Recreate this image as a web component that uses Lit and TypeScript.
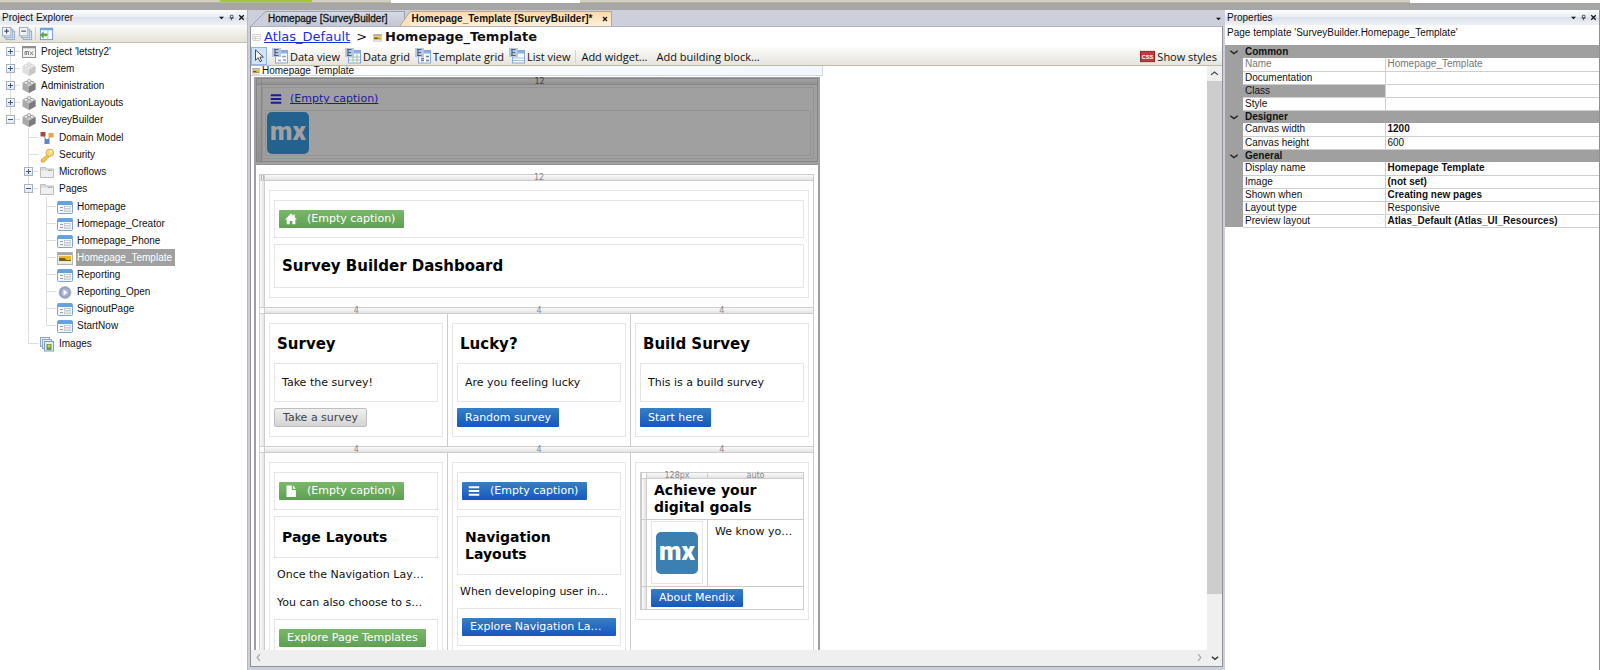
import { LitElement, html, css, svg, nothing, TemplateResult } from "lit";
import { customElement } from "lit/decorators.js";
import { classMap } from "lit/directives/class-map.js";

type IconName =
  | "project" | "moduleLight" | "module" | "domain" | "key" | "folder"
  | "page" | "template" | "flow" | "images" | "expandAll" | "collapseAll"
  | "locate" | "caret" | "pin" | "close" | "layout" | "cursor" | "dataview"
  | "datagrid" | "templategrid" | "listview" | "css" | "menu" | "home"
  | "file" | "up" | "down" | "left" | "right" | "chevron";

const cube = (top: string, left: string, right: string) => svg`
  <path d="M1.500 5 8 2l6.500 3v6.500L8 15l-6.500-3.500z" fill=${left}/>
  <path d="M8 8.500 14.500 5v6.500L8 15z" fill=${right}/>
  <path d="M1.500 5 8 2l6.500 3L8 8.500z" fill=${top}/>
  <ellipse cx="5" cy="4.800" rx="2" ry="1.400" fill="#f4f4f4" stroke=${right} stroke-width=".6"/>
  <ellipse cx="11" cy="4.800" rx="2" ry="1.400" fill="#f4f4f4" stroke=${right} stroke-width=".6"/>
  <ellipse cx="8" cy="3" rx="2" ry="1.400" fill="#f4f4f4" stroke=${right} stroke-width=".6"/>`;

const badge = svg`<path d="M0 0h9v9H0z" fill="#b9c7de"/><path d="M2 1.500h4.500M3 4.500h3M2 7.500h4.500M3 1.500v6" stroke="#4d6188" stroke-width="1.200" fill="none"/>`;

const sheet = svg`<rect x="3.500" y="2.500" width="12" height="12.500" fill="#f7fafe" stroke="#86a6d6"/><path d="M8 3h7.500v2.500H8z" fill="#86b0e6"/>`;

const icons: Record<IconName, TemplateResult> = {
  project: svg`<rect x="1.500" y="2.500" width="13" height="11" fill="#f2f2f2" stroke="#8f8f8f"/><path d="M1.500 3.500h13" stroke="#8f8f8f" stroke-width="1.500"/><path d="M4 11V7.500h1.500V11M5.500 7.500H7.500V11M9 7.500l3 3.500M12 7.500 9 11" stroke="#777" stroke-width=".9" fill="none"/>`,
  moduleLight: cube("#e6e6e6", "#e0e0e0", "#c6c6c6"),
  module: cube("#c8c8c8", "#a9a9a9", "#7d7d7d"),
  domain: svg`<path d="M4 4l4 8 4-7" stroke="#888" fill="none"/><rect x="1.500" y="2" width="5" height="4.500" fill="#a34a45"/><rect x="9.500" y="3" width="5" height="4.500" fill="#f0a04b"/><rect x="5.500" y="9" width="5" height="5" fill="#5f86c0"/>`,
  key: svg`<path d="M8.500 7.500 2 13l.5 2h3l.5-1.500 1.500-.5.3-1.500L10 10z" fill="#f3c64f" stroke="#c99b35" stroke-width=".8"/><circle cx="10.800" cy="5.800" r="3.800" fill="#f8d775" stroke="#cfa341" stroke-width=".8"/><circle cx="12" cy="4.600" r="1.100" fill="#fff"/>`,
  folder: svg`<path d="M1.500 13.500v-10h5l1 1.500h7v8.500z" fill="#d8d8d8" stroke="#bdbdbd"/><path d="M2 6.500h12V13H2z" fill="#efefef"/><path d="M9 6.500h4" stroke="#b0b0b0"/>`,
  page: svg`<rect x=".5" y="2.500" width="15" height="12" rx="1" fill="#f3f6fa" stroke="#7ea6d3"/><path d="M1 2.500h14V6H1z" fill="#5fa3e2"/><path d="M3 8.500h3M3 11.500h3" stroke="#9a9fa8"/><rect x="7.500" y="7.500" width="6" height="2" fill="#fff" stroke="#b4b9c2" stroke-width=".7"/><rect x="7.500" y="11" width="6" height="1.500" fill="#fff" stroke="#b4b9c2" stroke-width=".7"/>`,
  template: svg`<rect x=".5" y="2.500" width="15" height="12" fill="#eceae4" stroke="#b8b5ab"/><path d="M1 2.500h14v2.500H1z" fill="#a5a5a5"/><path d="M2 6h12v5H2z" fill="#e8b92c"/><path d="M2 8h6l1 2h5v1H2z" fill="#7d5f14"/>`,
  flow: svg`<circle cx="8" cy="8.500" r="6" fill="#8f9dba" stroke="#b8c0d0"/><circle cx="8" cy="8.500" r="4" fill="#a9b6cf"/><path d="M6.500 5.500 10.500 8.500l-4 3z" fill="#fff"/>`,
  images: svg`<rect x="1.500" y="1.500" width="9" height="9" fill="#e9eef6" stroke="#8fa5c6"/><rect x="3.500" y="3.500" width="9" height="9" fill="#e9eef6" stroke="#8fa5c6"/><rect x="5.500" y="5.500" width="9" height="9.500" fill="#e3edf9" stroke="#7f9bc4"/><path d="M7.500 8h5v6h-5z" fill="#5f9e45"/><circle cx="10" cy="10" r="1.500" fill="#d9c84c"/>`,
  expandAll: svg`<rect x="5.500" y="5.500" width="9" height="9" fill="#dce6f3" stroke="#93a9c8"/><rect x="3.500" y="3.500" width="9" height="9" fill="#dce6f3" stroke="#93a9c8"/><rect x="1.500" y="1.500" width="9" height="9" fill="#eef3fa" stroke="#93a9c8"/><path d="M6 3v5M3.500 5.500h5" stroke="#333"/>`,
  collapseAll: svg`<rect x="5.500" y="5.500" width="9" height="9" fill="#dce6f3" stroke="#93a9c8"/><rect x="3.500" y="3.500" width="9" height="9" fill="#dce6f3" stroke="#93a9c8"/><rect x="1.500" y="1.500" width="9" height="9" fill="#eef3fa" stroke="#93a9c8"/><path d="M3.500 5.500h5" stroke="#333"/>`,
  locate: svg`<rect x="1.500" y="2.500" width="13" height="12" fill="#fdfdfd" stroke="#6f9ad0"/><path d="M1 2h14v2.500H1z" fill="#6ea5df"/><path d="M9.500 4.500v10" stroke="#a8bfdc"/><path d="M1 9.500 5 5.500v2.500h4v3H5v2.500z" fill="#57ab4e"/>`,
  caret: svg`<path d="M3.500 6.500h9L8 11z" fill="#111"/>`,
  pin: svg`<path d="M6 4h4.500v5H6z" fill="none" stroke="#333" stroke-width="1.300"/><path d="M4.500 9h7M8 9v4" stroke="#333" stroke-width="1.300"/>`,
  close: svg`<path d="m4 4 8 8M12 4l-8 8" stroke="#111" stroke-width="2.300"/>`,
  layout: svg`<rect x="1.500" y="2.500" width="13" height="11" fill="#fff" stroke="#b5b5b5"/><path d="M2 6h12M6 6v7M2 9.500h12" stroke="#b5b5b5"/>`,
  cursor: svg`<path d="M4 1v12l3-3 2 4.500 2-1-2-4.200h4z" fill="#fff" stroke="#333" stroke-width="1"/>`,
  dataview: svg`${sheet}${badge}<path d="M10 8.500h4M6 12.500h3M11 12h3" stroke="#8fa6c4" stroke-width="1.500"/>`,
  datagrid: svg`${sheet}<path d="M4 9h11M4 12h11M8 6v8M12 6v8" stroke="#a7bfa0"/>${badge}`,
  templategrid: svg`${sheet}${badge}<path d="M6 10.500h3M6 12.500h3M11 8.500h3M11 12.500h3" stroke="#6b7b90" stroke-width="1.500"/>`,
  listview: svg`${sheet}<path d="M4 10h11M4 12.500h11" stroke="#a3bede"/>${badge}`,
  css: svg`<rect x=".5" y="2.500" width="15" height="11" fill="#c0393b" stroke="#8e2426"/><text x="8" y="10.500" text-anchor="middle" font-family="Liberation Sans" font-weight="bold" font-size="6" fill="#fff">CSS</text>`,
  menu: svg`<path d="M1 3h14M1 8h14M1 13h14" stroke="currentColor" stroke-width="2.600"/>`,
  home: svg`<path d="M8 .5 0 8.500h2.300V15h4v-4.500h3.500V15h4V8.500H16L13 5.500V2h-2v1.600z" fill="currentColor"/>`,
  file: svg`<path d="M2 .5h7v6h5.500V16H2zM10.500.5l4 4.500h-4z" fill="currentColor"/>`,
  up: svg`<path d="m3 10 5-4 5 4" stroke="#444" stroke-width="1.800" fill="none"/>`,
  down: svg`<path d="m3 6 5 4 5-4" stroke="#333" stroke-width="2.400" fill="none"/>`,
  left: svg`<path d="M10 3 6 8l4 5" stroke="#aaa" stroke-width="1.800" fill="none"/>`,
  right: svg`<path d="m6 3 4 5-4 5" stroke="#aaa" stroke-width="1.800" fill="none"/>`,
  chevron: svg`<path d="m2 6 6 4.500L14 6" stroke="#222" stroke-width="2.400" fill="none"/>`,
};

const icon = (name: IconName, size = 16) =>
  html`<svg class="icon" width=${size} height=${size} viewBox="0 0 16 16" aria-hidden="true">${icons[name]}</svg>`;

const shared = css`
  :host { display: block; box-sizing: border-box; }
  *, *::before, *::after { box-sizing: border-box; }
  button { font: inherit; color: inherit; border: 0; background: none; padding: 0; margin: 0; text-align: left; }
  h1, h2, h3, p, ul { margin: 0; padding: 0; }
  ul { list-style: none; }
  .icon { display: block; flex: none; }
  .titlebar {
    display: flex; align-items: center; height: 15px; padding: 0 1px 0 2px; gap: 1px;
    background: linear-gradient(#fdfdfe, #e9edf4 45%, #dbe1eb 50%, #eef1f6);
  }
  .titlebar h2 { flex: 1; font-size: 10px; font-weight: normal; line-height: 14px; }
`;

interface Node {
  label: string;
  icon: IconName;
  open?: boolean;
  leaf?: boolean;
  selected?: boolean;
  children?: Node[];
}

const page = (label: string): Node => ({ label, icon: "page", leaf: true });

const project: Node[] = [
  { label: "Project 'letstry2'", icon: "project" },
  { label: "System", icon: "moduleLight" },
  { label: "Administration", icon: "module" },
  { label: "NavigationLayouts", icon: "module" },
  {
    label: "SurveyBuilder", icon: "module", open: true,
    children: [
      { label: "Domain Model", icon: "domain", leaf: true },
      { label: "Security", icon: "key", leaf: true },
      { label: "Microflows", icon: "folder" },
      {
        label: "Pages", icon: "folder", open: true,
        children: [
          page("Homepage"), page("Homepage_Creator"), page("Homepage_Phone"),
          { label: "Homepage_Template", icon: "template", leaf: true, selected: true },
          page("Reporting"),
          { label: "Reporting_Open", icon: "flow", leaf: true },
          page("SignoutPage"), page("StartNow"),
        ],
      },
      { label: "Images", icon: "images", leaf: true },
    ],
  },
];

@customElement("project-explorer")
export class ProjectExplorer extends LitElement {
  static styles = [shared, css`
    :host { background: #fff; border-right: 1px solid #b4b8c4; }
    .tools {
      display: flex; align-items: center; gap: 2px; height: 18px; padding: 0 1px;
      background: linear-gradient(#fbfbf9, #e4e2d8); border-bottom: 1px solid #c3c2ac;
    }
    .sep { width: 1px; height: 13px; background: #d2cfc2; margin-right: 1px; }
    .tree { margin-left: 6px; }
    .tree .tree { margin: 1px 0 1px 18px; }
    .item { position: relative; }
    .item::before {
      content: ""; position: absolute; left: 4px; top: 0; bottom: 0; width: 1px; background: #dedede;
    }
    .item:last-child::before { bottom: auto; height: 9px; }
    .tree .tree > .item:first-child::before { top: -1px; }
    .root > .item:first-child::before { top: 9px; }
    .row { display: flex; align-items: center; height: 17px; position: relative; }
    .row::before { content: ""; position: absolute; left: 4px; top: 8px; width: 10px; height: 1px; background: #dedede; }
    .toggle {
      position: relative; width: 9px; height: 9px; border: 1px solid #a9b1bd; background: linear-gradient(#fff, #e3e6eb);
    }
    .toggle::before, .toggle.closed::after { content: ""; position: absolute; background: #3b5a9c; }
    .toggle::before { left: 1px; top: 3px; width: 5px; height: 1px; }
    .toggle.closed::after { left: 3px; top: 1px; width: 1px; height: 5px; }
    .blank { width: 9px; }
    .row .icon { margin: 0 3px 0 6px; }
    .label { padding: 0 3px 0 1px; line-height: 17px; white-space: nowrap; }
    .label.selected { background: #a0a0a0; color: #fff; }
  `];

  private tree(nodes: Node[], root = false): TemplateResult {
    return html`<ul class=${classMap({ tree: true, root })} role=${root ? "tree" : "group"}>
      ${nodes.map((n) => html`
        <li class="item" role="treeitem">
          <div class="row">
            ${n.leaf
              ? html`<span class="blank"></span>`
              : html`<button class=${classMap({ toggle: true, closed: !n.open })} aria-label="Toggle ${n.label}"></button>`}
            ${icon(n.icon)}
            <span class=${classMap({ label: true, selected: !!n.selected })}>${n.label}</span>
          </div>
          ${n.children ? this.tree(n.children) : nothing}
        </li>`)}
    </ul>`;
  }

  render() {
    return html`
      <div class="titlebar">
        <h2>Project Explorer</h2>
        <button aria-label="Panel menu">${icon("caret", 9)}</button>
        <button aria-label="Pin panel">${icon("pin", 9)}</button>
        <button aria-label="Close panel">${icon("close", 9)}</button>
      </div>
      <div class="tools">
        <button aria-label="Expand all">${icon("expandAll", 15)}</button>
        <button aria-label="Collapse all">${icon("collapseAll", 15)}</button>
        <span class="sep"></span>
        <button aria-label="Select in explorer">${icon("locate", 15)}</button>
      </div>
      ${this.tree(project, true)}`;
  }
}

interface Prop { name: string; value?: string; strong?: boolean; state?: "readonly" | "active"; }

const groups: { title: string; props: Prop[] }[] = [
  { title: "Common", props: [
    { name: "Name", value: "Homepage_Template", state: "readonly" },
    { name: "Documentation" },
    { name: "Class", state: "active" },
    { name: "Style" },
  ] },
  { title: "Designer", props: [
    { name: "Canvas width", value: "1200", strong: true },
    { name: "Canvas height", value: "600" },
  ] },
  { title: "General", props: [
    { name: "Display name", value: "Homepage Template", strong: true },
    { name: "Image", value: "(not set)", strong: true },
    { name: "Shown when", value: "Creating new pages", strong: true },
    { name: "Layout type", value: "Responsive" },
    { name: "Preview layout", value: "Atlas_Default (Atlas_UI_Resources)", strong: true },
  ] },
];

@customElement("properties-panel")
export class PropertiesPanel extends LitElement {
  static styles = [shared, css`
    :host { background: #fff; border-right: 1px solid #c4797b; }
    .subject { height: 20px; padding: 0 2px; line-height: 15px; }
    table { width: 100%; border-collapse: collapse; table-layout: fixed; }
    .gutter { width: 18px; }
    .names { width: 142px; }
    tr { height: 13px; }
    th, td { padding: 0 2px; line-height: 12px; height: 13px; text-align: left; font-weight: normal; white-space: nowrap; overflow: hidden; }
    .edge, .group th { background: #a0a0a0; }
    .group th { font-weight: bold; }
    .edge .icon { margin-left: 2px; }
    .prop th, .value { border-bottom: 1px solid #cfcfcf; }
    .value { border-left: 1px solid #cfcfcf; }
    .readonly { color: #777; }
    .prop.active th { background: #a0a0a0; }
    .strong { font-weight: bold; }
  `];

  render() {
    return html`
      <div class="titlebar">
        <h2>Properties</h2>
        <button aria-label="Panel menu">${icon("caret", 9)}</button>
        <button aria-label="Pin panel">${icon("pin", 9)}</button>
        <button aria-label="Close panel">${icon("close", 9)}</button>
      </div>
      <p class="subject">Page template 'SurveyBuilder.Homepage_Template'</p>
      <table>
        <colgroup><col class="gutter"><col class="names"><col></colgroup>
        ${groups.map((g) => html`<tbody>
          <tr class="group"><td class="edge">${icon("chevron", 10)}</td><th colspan="2" scope="rowgroup">${g.title}</th></tr>
          ${g.props.map((p) => html`
            <tr class=${classMap({ prop: true, readonly: p.state === "readonly", active: p.state === "active" })}>
              <td class="edge"></td>
              <th scope="row">${p.name}</th>
              <td class=${classMap({ value: true, strong: !!p.strong })}>${p.value ?? ""}</td>
            </tr>`)}
        </tbody>`)}
      </table>`;
  }
}

@customElement("mx-logo")
export class MxLogo extends LitElement {
  static styles = css`
    :host {
      display: flex; align-items: center; justify-content: center; flex: none;
      width: 42px; height: 42px; border-radius: 5px; overflow: hidden;
      background: var(--logo-bg, #3b80b0); color: var(--logo-fg, #fff);
      font: 900 26px/42px Roboto, "Open Sans", sans-serif;
    }
    span { padding-bottom: 4px; }
  `;
  render() { return html`<span>mx</span>`; }
}

@customElement("page-canvas")
export class PageCanvas extends LitElement {
  static styles = [shared, css`
    :host {
      border: 2px solid #a0a0a0; border-width: 1px 2px 0; background: #fff; color: #111;
      font: 11px/17px "DejaVu Sans", Verdana, sans-serif;
    }
    .bar {
      display: flex; height: 7px; border: 1px solid #cdcdcd; border-left: 0;
      background: linear-gradient(#fafafa, #e3e3e3);
      color: #888; font-size: 8px; line-height: 6px; text-align: center;
    }
    .bar::before { content: ""; flex: none; width: 6px; background: #fff; border: solid #cdcdcd; border-width: 0 1px; }
    .bar.grip::before { background: repeating-linear-gradient(90deg, #eee 0 1px, #b5b5b5 1px 2px); }
    .bar span { flex: 1; }
    .cells { display: flex; }
    .cells::before {
      content: ""; flex: none; width: 6px; border: solid #cdcdcd; border-width: 0 1px;
      background: linear-gradient(90deg, #fafafa, #e3e3e3);
    }
    .cell { flex: 1; min-width: 0; padding: 9px 4px; border-right: 1px solid #cdcdcd; }
    .box { border: 1px solid #e6e6e6; padding: 9px 4px; }
    .stack { display: flex; flex-direction: column; align-items: stretch; gap: 6px; }
    .text { padding: 10px 7px; }
    .title { padding: 13px 7px 12px; }
    .sub { padding: 12px 7px 11px; }
    h1, h2 { font-size: 15px; line-height: 17px; }
    h3 { font-size: 14px; line-height: 17px; }
    h1, h2, h3 { color: #000; }
    .card { padding-top: 0; }
    .card h2 { padding: 12px 3px 10px; }
    .para { padding: 0 3px; line-height: 28px; white-space: nowrap; overflow: hidden; }
    .paras { margin: -3px 0 -4px; }

    .btn {
      display: flex; align-items: center; gap: 10px; width: fit-content; max-width: 100%; height: 18px;
      padding: 0 8px 1px; border-radius: 1px; color: #fff; white-space: nowrap;
    }
    .card .btn { height: 19px; }
    .btn.wide { width: 100%; }
    .btn.with-icon { padding: 0 9px 1px 6px; }
    .green { background: linear-gradient(#78b968, #5f9f53); }
    .blue { background: linear-gradient(#3480c6, #1757c0); }
    .plain { background: linear-gradient(#efefef, #d4d4d4); border: 1px solid #bebebe; color: #444; border-radius: 2px; }

    .header { background: #a0a0a0; padding-bottom: 2px; border-bottom: 1px solid #959595; }
    .header .bar, .header .cells::before, .header .bar::before {
      background: linear-gradient(#a2a2a2, #909090); border-color: #868686; color: #444;
    }
    .header .cell { padding: 2px 3px 2px 0; border-color: #868686; }
    .header .cells { border-bottom: 1px solid #868686; }
    .header .box { border-color: #939393; padding: 0 2px 2px; }
    .header .box .box { padding: 1px; }
    .navlink { display: flex; align-items: center; gap: 8px; height: 22px; padding: 0 0 1px 5px; color: #1b1b9b; }
    .navlink a { color: inherit; }
    .header mx-logo { --logo-bg: #23618f; --logo-fg: #a0a0a0; }
    .body { padding: 9px 4px 0 3px; }

    .mini { border: 1px solid #cdcdcd; }
    .mini .bar { border-width: 0 0 1px; height: 6px; line-height: 5px; }
    .mini .bar .fixed { flex: 0 0 61px; border-right: 1px solid #cdcdcd; }
    .mini .cells + .cells { border-top: 1px solid #cdcdcd; }
    .mini .cell { padding: 3px 7px; border-right: 0; }
    .mini .cell.pic { flex: 0 0 61px; padding: 1px 4px 2px; border-right: 1px solid #cdcdcd; }
    .mini .cell.foot { padding: 2px 4px; }
    .mini .pic .box { height: 63px; display: flex; align-items: center; justify-content: center; padding: 0; }
  `];

  private caption(kind: string, name: IconName) {
    return html`<div class="box"><button class="btn with-icon ${kind}">${icon(name, 12)}(Empty caption)</button></div>`;
  }

  private card(title: string, text: string, label: string, kind: string) {
    return html`<div class="cell"><section class="box card">
      <h2>${title}</h2>
      <div class="stack">
        <p class="box text">${text}</p>
        <button class="btn ${kind}">${label}</button>
      </div>
    </section></div>`;
  }

  render() {
    return html`
      <header class="header">
        <div class="bar grip"><span>12</span></div>
        <div class="cells"><div class="cell"><div class="box">
          <div class="navlink">${icon("menu", 12)}<a href="#">(Empty caption)</a></div>
          <div class="box"><mx-logo></mx-logo></div>
        </div></div></div>
      </header>
      <div class="body">
        <div class="bar grip"><span>12</span></div>
        <div class="cells"><div class="cell"><div class="box stack">
          ${this.caption("green", "home")}
          <div class="box title"><h1>Survey Builder Dashboard</h1></div>
        </div></div></div>
        <div class="bar"><span>4</span><span>4</span><span>4</span></div>
        <div class="cells">
          ${this.card("Survey", "Take the survey!", "Take a survey", "plain")}
          ${this.card("Lucky?", "Are you feeling lucky", "Random survey", "blue")}
          ${this.card("Build Survey", "This is a build survey", "Start here", "blue")}
        </div>
        <div class="bar"><span>4</span><span>4</span><span>4</span></div>
        <div class="cells">
          <div class="cell"><section class="box stack">
            ${this.caption("green", "file")}
            <div class="box sub"><h3>Page Layouts</h3></div>
            <div class="paras">
              <p class="para">Once the Navigation Lay…</p>
              <p class="para">You can also choose to s…</p>
            </div>
            <div class="box"><button class="btn green">Explore Page Templates</button></div>
          </section></div>
          <div class="cell"><section class="box stack">
            ${this.caption("blue", "menu")}
            <div class="box sub"><h3>Navigation Layouts</h3></div>
            <div class="paras"><p class="para">When developing user in…</p></div>
            <div class="box"><button class="btn blue wide">Explore Navigation La…</button></div>
          </section></div>
          <div class="cell"><section class="box">
            <div class="mini">
              <div class="bar"><span class="fixed">128px</span><span>auto</span></div>
              <div class="cells"><div class="cell"><h3>Achieve your digital goals</h3></div></div>
              <div class="cells">
                <div class="cell pic"><div class="box"><mx-logo></mx-logo></div></div>
                <div class="cell"><p>We know yo…</p></div>
              </div>
              <div class="cells"><div class="cell foot"><button class="btn blue">About Mendix</button></div></div>
            </div>
          </section></div>
        </div>
      </div>`;
  }
}

const widgets: { label: string; icon: IconName }[] = [
  { label: "Data view", icon: "dataview" },
  { label: "Data grid", icon: "datagrid" },
  { label: "Template grid", icon: "templategrid" },
  { label: "List view", icon: "listview" },
];

@customElement("page-editor")
export class PageEditor extends LitElement {
  static styles = [shared, css`
    :host { display: flex; flex-direction: column; min-width: 0; min-height: 0; background: #cdcfda; padding: 0 2px 3px 2px; }
    .tabs { display: flex; align-items: flex-end; height: 16px; padding: 1px 0 0 1px; flex: none; }
    .tab { display: flex; height: 15px; }
    .slope { display: block; flex: none; }
    .tab button.name {
      height: 15px; padding: 0 16px 0 1px; background: linear-gradient(#d6dae4, #c2c7d4);
      border: solid #9da2b0; border-width: 1px 1px 0 0; line-height: 14px; white-space: nowrap;
      -webkit-text-stroke: 0.3px currentColor;
    }
    .tab.active { margin-left: -5px; position: relative; }
    .tab.active button.name {
      padding-right: 8px; background: linear-gradient(#fdd9ab, #fff0da); border-color: #b9a88f; border-right: 0;
      font-weight: bold; -webkit-text-stroke: 0;
    }
    .tab .shut { height: 15px; padding-right: 2px; background: linear-gradient(#fdd9ab, #fff0da); border: solid #b9a88f; border-width: 1px 1px 0 0; }
    .tabs .more { margin: 0 0 3px auto; }
    .frame { flex: 1; min-height: 0; display: flex; flex-direction: column; background: #fff; border: 1px solid #8f929a; border-top-color: #b0b3bd; }
    .crumbs {
      display: flex; align-items: center; gap: 6px; height: 20px; padding-left: 1px; flex: none;
      font: 13px/20px "DejaVu Sans", Verdana, sans-serif;
    }
    .crumbs .icon { margin-right: -3px; }
    .crumbs a { color: #1a2fe0; }
    .crumbs h1 { font-size: 13px; }
    .toolbar {
      display: flex; align-items: center; height: 19px; flex: none; gap: 5px; padding-right: 5px;
      background: linear-gradient(#fcfcfa, #e6e4db); border-bottom: 1px solid #bdbda6;
      font: 11px/17px "Open Sans", "Noto Sans", sans-serif;
    }
    .toolbar button { display: flex; align-items: center; gap: 2px; white-space: nowrap; }
    .toolbar .pick { width: 16px; height: 18px; background: #cfe3f9; border: 1px solid #8db6e4; }
    .rule { width: 1px; height: 13px; background: #d6d4c8; }
    .spacer { flex: 1; }
    .toolbar .add { margin-right: 4px; }
    .view { flex: 1; min-height: 0; display: grid; grid-template: minmax(0, 1fr) 16px / minmax(0, 1fr) 15px; }
    .surface { overflow: hidden; min-height: 0; }
    .caption {
      display: flex; align-items: center; gap: 2px; height: 10px; max-width: 572px; padding-left: 1px;
      border: 1px solid #d4dae2; border-width: 0 1px 1px 0; background: linear-gradient(90deg, #fff, #f3f7fd); line-height: 9px;
    }
    page-canvas { margin: 1px 0 0 3px; max-width: 566px; }
    .vbar { display: flex; flex-direction: column; align-items: center; background: #efefef; }
    .thumb { width: 100%; flex: 513 1 0; background: #cdcdcd; }
    .track { flex: 56 1 0; }
    .step { display: flex; align-items: center; justify-content: center; height: 15px; width: 15px; flex: none; }
    .hbar { display: flex; justify-content: space-between; background: #efefef; }
    .corner { background: #efefef; height: 16px; }
  `];

  render() {
    return html`
      <nav class="tabs">
        <div class="tab">
          <svg class="slope" width="16" height="15"><path d="M0 15 13 2Q14 .500 16 .500V15z" fill="#ccd0dc"/><path d="M0 15 13 2Q14 .500 16 .500" fill="none" stroke="#9da2b0"/></svg>
          <button class="name">Homepage [SurveyBuilder]</button>
        </div>
        <div class="tab active">
          <svg class="slope" width="11" height="15"><path d="M0 15 9 2Q10 .500 11 .500V15z" fill="#fde3c2"/><path d="M0 15 9 2Q10 .500 11 .500" fill="none" stroke="#b9a88f"/></svg>
          <button class="name">Homepage_Template [SurveyBuilder]*</button>
          <button class="shut" aria-label="Close tab">${icon("close", 8)}</button>
        </div>
        <button class="more" aria-label="Open documents">${icon("caret", 9)}</button>
      </nav>
      <div class="frame">
        <div class="crumbs">
          ${icon("layout", 9)}<a href="#">Atlas_Default</a><span>&gt;</span>${icon("template", 9)}<h1>Homepage_Template</h1>
        </div>
        <div class="toolbar">
          <button class="pick" aria-label="Select">${icon("cursor", 14)}</button>
          ${widgets.map((w) => html`<button>${icon(w.icon, 16)}${w.label}</button>`)}
          <span class="rule"></span>
          <button class="add">Add widget...</button>
          <button>Add building block...</button>
          <span class="spacer"></span>
          <button>${icon("css", 15)}Show styles</button>
        </div>
        <div class="view">
          <div class="surface">
            <div class="caption">${icon("template", 8)}<span>Homepage Template</span></div>
            <page-canvas></page-canvas>
          </div>
          <div class="vbar">
            <button class="step" aria-label="Scroll up">${icon("up", 11)}</button>
            <div class="thumb"></div>
            <div class="track"></div>
          </div>
          <div class="hbar">
            <button class="step" aria-label="Scroll left">${icon("left", 11)}</button>
            <button class="step" aria-label="Scroll right">${icon("right", 11)}</button>
          </div>
          <button class="step corner" aria-label="Scroll down">${icon("down", 10)}</button>
        </div>
      </div>`;
  }
}

@customElement("app-root")
export class AppRoot extends LitElement {
  static styles = css`
    :host {
      display: flex; flex-direction: column; height: 100vh; overflow: hidden;
      background: #cdcfda; color: #111;
      font: 10px/14px "Liberation Sans", Arial, sans-serif;
    }
    .strip {
      box-sizing: border-box; display: grid; grid-template-columns: 220fr 92fr 79fr 189fr 830fr 190fr; flex: none;
      height: 10px; padding-bottom: 7px; background: #a6a6a6;
    }
    .strip span { background: #d2d0c2; border-bottom: 1px solid #b7b896; }
    .strip .go { background: #a4c63a; }
    .strip .field { background: #fff; border-color: #fff; }
    .main {
      flex: 1; min-height: 0; display: grid;
      grid-template: minmax(0, 1fr) / 248px minmax(0, 1fr) 375px;
    }
  `;

  render() {
    return html`
      <div class="strip">
        <span></span><span class="go"></span><span></span><span class="field"></span><span></span><span class="field"></span>
      </div>
      <main class="main">
        <project-explorer></project-explorer>
        <page-editor></page-editor>
        <properties-panel></properties-panel>
      </main>`;
  }
}
